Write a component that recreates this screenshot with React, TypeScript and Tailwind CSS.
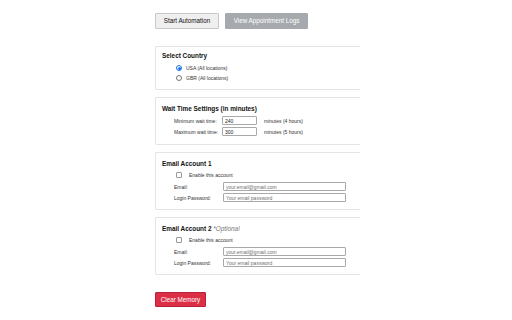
import React from "react";

function Radio({ checked, label }: { checked?: boolean; label: string }) {
  return (
    <div className="flex items-center h-[10px] pl-[14px] gap-[4px]">
      {checked ? (
        <span className="w-[6px] h-[6px] rounded-full border border-[#1a73e8] flex items-center justify-center bg-white">
          <span className="w-[3px] h-[3px] rounded-full bg-[#1a73e8]" />
        </span>
      ) : (
        <span className="w-[6px] h-[6px] rounded-full border border-[#767676] bg-white" />
      )}
      <span className="text-[5px] leading-[6px] text-[#333]">{label}</span>
    </div>
  );
}

function Card({ children, className = "" }: { children: React.ReactNode; className?: string }) {
  return (
    <div className={`border border-r-0 border-[#e4e4e4] rounded-l-[2px] pl-[6px] ${className}`}>{children}</div>
  );
}

function Title({ children }: { children: React.ReactNode }) {
  return <div className="text-[6.4px] leading-[8px] font-bold text-[#111]">{children}</div>;
}

function WaitRow({ label, value, note }: { label: string; value: string; note: string }) {
  return (
    <div className="flex items-center h-[9px] pl-[12px]">
      <span className="w-[48px] text-[5px] leading-[6px] text-[#333]">{label}</span>
      <input
        defaultValue={value}
        className="w-[35px] h-[9px] border border-[#a9a9a9] rounded-[1px] px-[2px] text-[5px] leading-[6px] text-[#222] outline-none"
      />
      <span className="ml-[7px] text-[5px] leading-[6px] text-[#333]">{note}</span>
    </div>
  );
}

function FieldRow({ label, placeholder }: { label: string; placeholder: string }) {
  return (
    <div className="flex items-center h-[9px] pl-[12px]">
      <span className="w-[49px] text-[5px] leading-[6px] text-[#333]">{label}</span>
      <input
        placeholder={placeholder}
        className="w-[123px] h-[9px] border border-[#a9a9a9] rounded-[1px] px-[2px] text-[5px] leading-[6px] text-[#222] placeholder:text-[#6f6f6f] outline-none"
      />
    </div>
  );
}

function CheckRow() {
  return (
    <div className="flex items-center h-[6px] pl-[14px] gap-[7px]">
      <span className="w-[6px] h-[6px] border border-[#9a9a9a] rounded-[1px] bg-white" />
      <span className="text-[5px] leading-[6px] text-[#333]">Enable this account</span>
    </div>
  );
}

export default function App() {
  return (
    <div className="w-[512px] h-[320px] bg-white overflow-hidden font-['Liberation_Sans',Arial,sans-serif]">
      <div className="ml-[155px] w-[205px] pt-[13px] flex flex-col items-start">
        <div className="flex gap-[6px]">
          <button className="w-[64px] h-[16px] bg-[#efefef] border border-[#c8c8c8] rounded-[1px] text-[6.3px] text-[#111] flex items-center justify-center">
            Start Automation
          </button>
          <button className="w-[83px] h-[16px] bg-[#a6a9ae] border border-[#a6a9ae] rounded-[1px] text-[6.3px] text-white flex items-center justify-center">
            View Appointment Logs
          </button>
        </div>

        <div className="mt-[17px] w-full flex flex-col gap-[7px]">
          <Card className="pt-[5px] pb-[6px]">
            <Title>Select Country</Title>
            <div className="mt-[3px] flex flex-col">
              <Radio checked label="USA (All locations)" />
              <Radio label="GBR (All locations)" />
            </div>
          </Card>

          <Card className="pt-[7px] pb-[8px]">
            <Title>Wait Time Settings (in minutes)</Title>
            <div className="mt-[3px] flex flex-col gap-[2px]">
              <WaitRow label="Minimum wait time:" value="240" note="minutes (4 hours)" />
              <WaitRow label="Maximum wait time:" value="300" note="minutes (5 hours)" />
            </div>
          </Card>

          <Card className="pt-[7px] pb-[7px]">
            <Title>Email Account 1</Title>
            <div className="mt-[4px]">
              <CheckRow />
            </div>
            <div className="mt-[4px] flex flex-col gap-[2px]">
              <FieldRow label="Email:" placeholder="your.email@gmail.com" />
              <FieldRow label="Login Password:" placeholder="Your email password" />
            </div>
          </Card>

          <Card className="pt-[7px] pb-[7px]">
            <Title>
              Email Account 2{" "}
              <span className="font-normal italic text-[#777]">*Optional</span>
            </Title>
            <div className="mt-[4px]">
              <CheckRow />
            </div>
            <div className="mt-[4px] flex flex-col gap-[2px]">
              <FieldRow label="Email:" placeholder="your.email@gmail.com" />
              <FieldRow label="Login Password:" placeholder="Your email password" />
            </div>
          </Card>
        </div>

        <button className="mt-[17px] w-[51px] h-[15px] bg-[#dc2f45] border border-[#b8213a] rounded-[1px] text-[6.3px] text-white flex items-center justify-center">
          Clear Memory
        </button>
      </div>
    </div>
  );
}
